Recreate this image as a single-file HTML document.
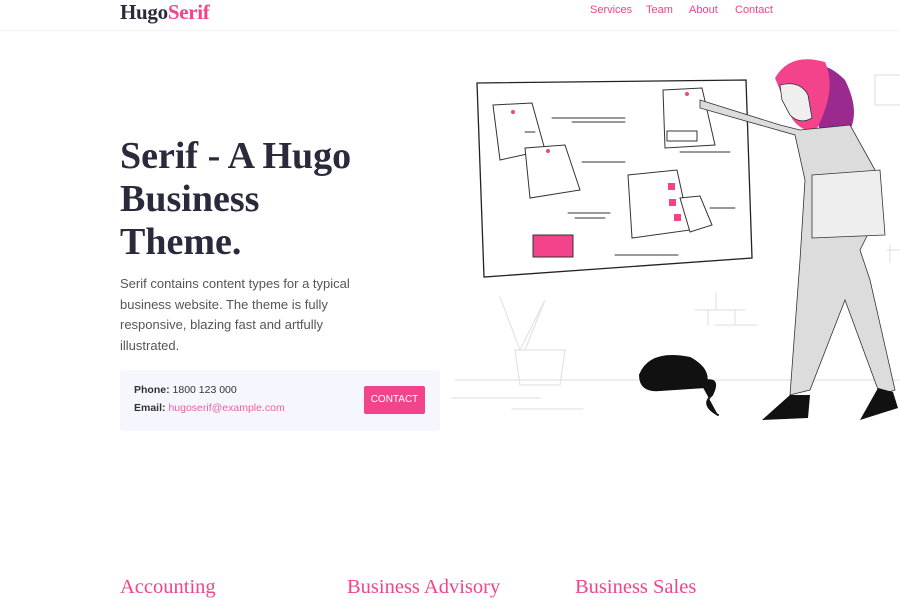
<!DOCTYPE html>
<html><head><meta charset="utf-8"><style>
*{margin:0;padding:0;box-sizing:border-box}
body{width:900px;height:600px;overflow:hidden;background:#fff;font-family:"Liberation Sans",sans-serif;position:relative}
.hdr{position:absolute;left:0;top:0;width:900px;height:31px;border-bottom:1px solid #f4f4f6}
.logo{position:absolute;left:120px;top:0px;font-family:"Liberation Serif",serif;font-weight:bold;font-size:21px;color:#2b2a3d;letter-spacing:-0.3px}
.logo span{color:#f2438b}
.nav{position:absolute;top:4px;font-size:11px;color:#f2438b}
h1{position:absolute;left:120px;top:135px;width:240px;font-family:"Liberation Serif",serif;font-weight:bold;font-size:38px;line-height:43px;color:#2b2a3d}
p.lead{position:absolute;left:120px;top:274px;width:245px;font-size:13px;line-height:20.6px;color:#555}
.box{position:absolute;left:120px;top:370px;width:320px;height:61px;background:#f6f6fe;border-radius:3px}
.box div{position:absolute;left:14px;font-size:10.5px;color:#333}
.box a{color:#f0609d}
.btn{position:absolute;left:364px;top:386px;width:61px;height:28px;background:#f2438b;border-radius:2px;color:#fff;font-size:10px;text-align:center;line-height:28px}
h3{position:absolute;top:576px;font-family:"Liberation Serif",serif;font-weight:normal;font-size:20.5px;color:#f2438b}
svg{position:absolute;left:0;top:0}
</style></head><body>
<div class="hdr"></div>
<div class="logo">Hugo<span>Serif</span></div>
<div class="nav" style="left:590px">Services</div>
<div class="nav" style="left:646px">Team</div>
<div class="nav" style="left:689px">About</div>
<div class="nav" style="left:735px">Contact</div>
<h1>Serif - A Hugo Business Theme.</h1>
<p class="lead">Serif contains content types for a typical business website. The theme is fully responsive, blazing fast and artfully illustrated.</p>
<div class="box"><div style="top:14px"><b>Phone:</b> 1800 123 000</div><div style="top:32px"><b>Email:</b> <a>hugoserif@example.com</a></div></div>
<div class="btn">CONTACT</div>
<h3 style="left:120px">Accounting</h3>
<h3 style="left:347px">Business Advisory</h3>
<h3 style="left:575px">Business Sales</h3>
<svg width="900" height="600" viewBox="0 0 900 600" fill="none" stroke-linecap="round">
<g stroke="#e4e4e4" stroke-width="1.2">
<line x1="455" y1="380" x2="900" y2="380"/><line x1="452" y1="398" x2="540" y2="398"/><line x1="512" y1="409" x2="583" y2="409"/>
<path d="M500 297 L520 350 L545 300 L525 350"/><path d="M515 350 L565 350 L560 385 L520 385 Z"/>
<path d="M695 310 H745 M716 293 V310 M708 310 V325 M735 310 V325 M715 325 H757"/>
<path d="M875 75 H900 M875 75 V105 H900"/><path d="M887 250 H900 M890 245 V262"/>
</g>
<path d="M477 83 L746 80 L752 258 L484 277 Z" fill="#fff" stroke="#222" stroke-width="1.3"/>
<g stroke="#333" stroke-width="1">
<path d="M493 105 L532 103 L545 150 L500 160 Z" fill="#fff"/>
<path d="M525 148 L565 145 L580 190 L530 198 Z" fill="#fff"/>
<path d="M663 90 L702 88 L715 145 L665 148 Z" fill="#fff"/>
<path d="M628 175 L677 170 L690 230 L632 238 Z" fill="#fff"/>
<path d="M680 198 L700 196 L712 225 L690 232 Z" fill="#fff"/>
<path d="M552 118 H625 M572 122 H625 M582 162 H625 M568 213 H610 M575 218 H605 M615 255 H678 M680 152 H730 M710 208 H735 M535 132 H525"/>
<rect x="533" y="235" width="40" height="22" fill="#f2438b"/>
<rect x="667" y="131" width="30" height="10"/>
</g>
<g fill="#f2438b"><circle cx="513" cy="112" r="2"/><circle cx="548" cy="151" r="2"/><circle cx="687" cy="94" r="2"/><rect x="668" y="183" width="7" height="7"/><rect x="669" y="199" width="7" height="7"/><rect x="674" y="214" width="7" height="7"/></g>
<path d="M800 72 Q820 55 845 80 Q860 110 850 130 L820 130 Z" fill="#9b2a8f"/>
<path d="M775 78 Q790 52 825 62 Q838 90 815 132 Q795 130 788 110 Z" fill="#f2438b"/>
<path d="M780 85 Q800 80 808 95 L812 118 Q800 125 790 115 L782 100 Z" fill="#efefef" stroke="#333" stroke-width=".8"/>
<path d="M700 100 L780 125 L800 130 L850 125 L875 170 L870 230 L860 250 L870 280 L895 390 L880 395 L845 300 L810 390 L790 395 L800 260 L805 180 L795 135 L700 108 Z" fill="#dcdcdc" stroke="#333" stroke-width=".8"/>
<path d="M812 175 L880 170 L885 235 L812 238 Z" fill="#eee" stroke="#333" stroke-width=".8"/>
<path d="M790 395 L810 395 L808 418 L762 420 Z M878 388 L893 392 L898 408 L860 420 Z" fill="#111"/>
<path d="M640 375 Q650 350 690 358 Q712 370 705 387 L660 390 Q640 392 640 375 Z M700 382 Q722 375 712 395 Q700 405 718 415" fill="#111" stroke="#111" stroke-width="2"/>
</svg>
</body></html>
